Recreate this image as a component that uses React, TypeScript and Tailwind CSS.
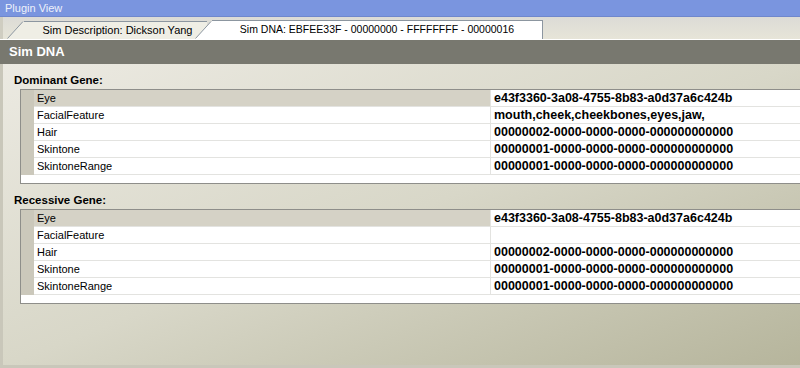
import React from "react";

type GeneRow = { name: string; value: string };

const dominant: GeneRow[] = [
  { name: "Eye", value: "e43f3360-3a08-4755-8b83-a0d37a6c424b" },
  { name: "FacialFeature", value: "mouth,cheek,cheekbones,eyes,jaw," },
  { name: "Hair", value: "00000002-0000-0000-0000-000000000000" },
  { name: "Skintone", value: "00000001-0000-0000-0000-000000000000" },
  { name: "SkintoneRange", value: "00000001-0000-0000-0000-000000000000" },
];

const recessive: GeneRow[] = [
  { name: "Eye", value: "e43f3360-3a08-4755-8b83-a0d37a6c424b" },
  { name: "FacialFeature", value: "" },
  { name: "Hair", value: "00000002-0000-0000-0000-000000000000" },
  { name: "Skintone", value: "00000001-0000-0000-0000-000000000000" },
  { name: "SkintoneRange", value: "00000001-0000-0000-0000-000000000000" },
];

// slanted left edge of a tab
const TabSlant = ({ fill }: { fill: string }) => (
  <svg width="17" height="18" viewBox="0 0 17 18" className="block shrink-0">
    <polygon points="0,18 16,0.5 17,0.5 17,18" fill={fill} />
    <line x1="0.5" y1="17.5" x2="16" y2="0.5" stroke="#8c96a0" strokeWidth="1" />
  </svg>
);

const PropertyGrid = ({ rows }: { rows: GeneRow[] }) => (
  <div className="ml-[6px] w-[800px] border border-[#8e8e8a] bg-white">
    {rows.map((row, i) => (
      <div key={row.name} className="flex h-[17px]">
        <div className="w-[13px] shrink-0 bg-[#cbc8bb]" />
        <div
          className={`flex w-[456px] shrink-0 items-center border-b border-[#e3e3e0] pl-[3px] text-[11px] text-black ${
            i === 0 ? "bg-[#d5d2c6]" : "bg-white"
          }`}
        >
          {row.name}
        </div>
        <div className="flex flex-1 items-center border-b border-l border-[#e3e3e0] pl-[3px] text-[12.5px] font-bold text-black">
          {row.value}
        </div>
      </div>
    ))}
    <div className="h-[8px]" />
  </div>
);

export default function App() {
  return (
    <div className="flex h-[368px] w-[800px] flex-col overflow-hidden bg-[#e6e4d8] font-['Liberation_Sans',Arial,sans-serif]">
      {/* title bar */}
      <div className="flex h-[17px] shrink-0 items-center border-b border-[#6f87cc] bg-[#7a95df] pl-[5px] text-[11px] text-[#eef1fb]">
        Plugin View
      </div>

      {/* tab strip */}
      <div className="flex h-[22px] shrink-0 items-end border-l-[3px] border-[#cfcdc1] bg-linear-to-b from-[#dcdbd6] to-[#e7e5d8] pl-[4px]">
        <div className="z-0 flex h-[18px] items-stretch">
          <TabSlant fill="#efeee5" />
          <div className="flex w-[183px] items-center justify-center border-t border-[#8c96a0] bg-[#efeee5] pl-[4px] text-[11px] text-black">
            Sim Description: Dickson Yang
          </div>
        </div>
        <div className="z-10 -ml-[12px] flex h-[19px] items-stretch">
          <div className="flex items-end">
            <TabSlant fill="#ffffff" />
          </div>
          <div className="flex w-[331px] items-center justify-center border-t border-r border-[#8c96a0] bg-white text-[10.5px] text-black">
            Sim DNA: EBFEE33F - 00000000 - FFFFFFFF - 00000016
          </div>
        </div>
      </div>
      <div className="h-[1px] shrink-0 bg-white" />

      {/* header */}
      <div className="flex h-[24px] shrink-0 items-center bg-[#78786f] pl-[9px] text-[13px] font-bold text-white">
        Sim DNA
      </div>

      {/* content */}
      <div className="flex flex-1 flex-col border-l-[3px] border-b-[3px] border-[#c9c7ba] bg-linear-to-br from-[#eceae2] via-[#d8d7c8] to-[#b6b59c] pl-[11px]">
        <div className="mt-[9px] h-[14px] text-[11.5px] leading-[14px] font-bold text-black">
          Dominant Gene:
        </div>
        <div className="mt-[2px]">
          <PropertyGrid rows={dominant} />
        </div>
        <div className="mt-[9px] h-[14px] text-[11.5px] leading-[14px] font-bold text-black">
          Recessive Gene:
        </div>
        <div className="mt-[2px]">
          <PropertyGrid rows={recessive} />
        </div>
      </div>
    </div>
  );
}
